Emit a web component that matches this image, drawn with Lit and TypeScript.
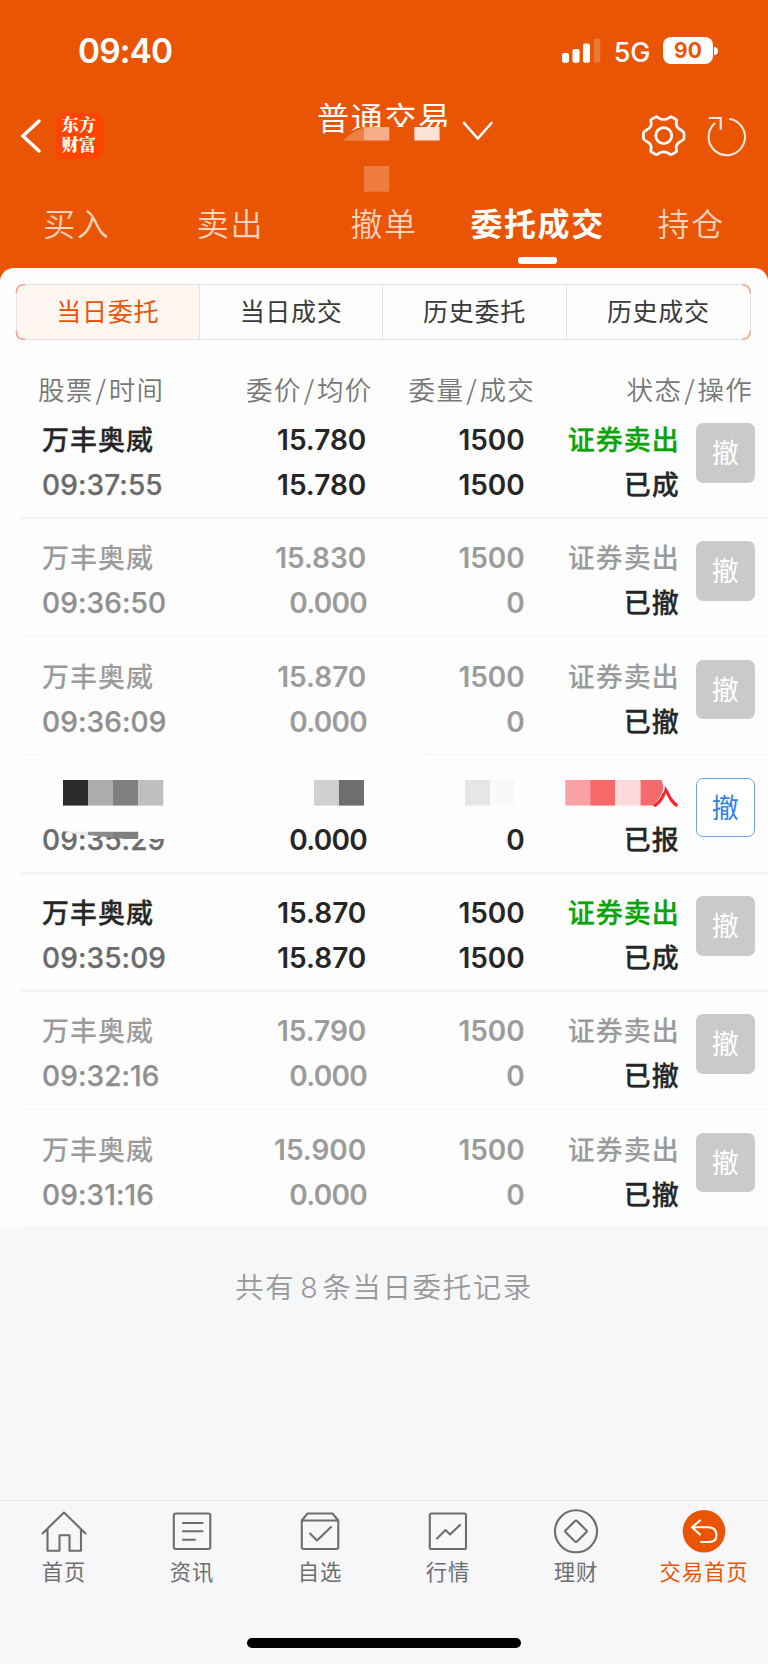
import { LitElement, html, svg, css, nothing } from "lit";
import { customElement, property } from "lit/decorators.js";
import { classMap } from "lit/directives/class-map.js";

interface Order {
  name: string;
  time: string;
  price: string;
  avg: string;
  qty: string;
  filled: string;
  side: string;
  status: string;
  kind: "done" | "cancelled" | "pending";
}

const cancelled = (time: string, price: string): Order => ({
  name: "万丰奥威", time, price, avg: "0.000", qty: "1500", filled: "0",
  side: "证券卖出", status: "已撤", kind: "cancelled",
});
const done = (time: string, price: string): Order => ({
  name: "万丰奥威", time, price, avg: price, qty: "1500", filled: "1500",
  side: "证券卖出", status: "已成", kind: "done",
});

const ORDERS: Order[] = [
  done("09:37:55", "15.780"),
  cancelled("09:36:50", "15.830"),
  cancelled("09:36:09", "15.870"),
  { name: "", time: "09:35:29", price: "", avg: "0.000", qty: "", filled: "0", side: "入", status: "已报", kind: "pending" },
  done("09:35:09", "15.870"),
  cancelled("09:32:16", "15.790"),
  cancelled("09:31:16", "15.900"),
];

@customElement("order-row")
class OrderRow extends LitElement {
  @property({ attribute: false }) order!: Order;

  static styles = css`
    :host { display: block; }
    .row {
      position: relative;
      box-sizing: border-box;
      height: 118.25px;
      display: grid;
      grid-template-columns: 174px 150.3px 158.5px 154px 1fr;
      padding: 18px 13px 0 42px;
      color: #262626;
      font: 600 28px/45px Inter, "Noto Sans CJK SC", sans-serif;
    }
    .line {
      position: absolute;
      left: 20px;
      right: 0;
      bottom: -1px;
      height: 1.5px;
      background: #f4f4f5;
    }
    .col { display: grid; grid-template-rows: 45px 45px; white-space: nowrap; margin-top: 0.7px; }
    .right { text-align: right; }
    .cjk {
      font: 500 27px/45px "Noto Sans CJK SC", sans-serif;
      letter-spacing: 1px;
      margin-top: -2px;
      -webkit-text-stroke: 0.3px currentColor;
    }
    .right .cjk { margin-right: -1px; }
    .time { font-weight: 500; color: #6b6b6b; letter-spacing: 0.1px; -webkit-text-stroke: 0.25px currentColor; }
    .zero { letter-spacing: -0.7px; margin-right: -0.7px; }
    .sell { color: #0aa30a; }
    .buy { color: #f0252b; }
    .cancelled .dim { color: #9b9b9b; }
    .cancelled .cjk.dim { -webkit-text-stroke-width: 0; }
    .cancelled .time { color: #8f8f8f; }
    .btn {
      justify-self: end;
      box-sizing: border-box;
      width: 59.5px;
      height: 59.5px;
      margin-top: 5.5px;
      border-radius: 7px;
      background: #cacaca;
      color: #fff;
      font: 400 27px/58px "Noto Sans CJK SC", sans-serif;
      text-align: center;
    }
    .pending .btn { background: #fff; border: 1.5px solid #6ca4ec; color: #3482e6; line-height: 55px; }
    .mask { position: absolute; left: 0; top: -12px; width: 768px; height: 130px; }
  `;

  private mask() {
    const cell = (x: number, w: number, fill: string) =>
      svg`<rect x=${x} y="38" width=${w} height="25.6" fill=${fill}></rect>`;
    return html`<svg class="mask" viewBox="0 0 768 130">
      <path fill="#fefefe" d="M48 3H405Q430 10 431 26L560 24L655 28Q668 34 664 50L640 68L520 75L390 76L300 80L170 97H130L62 89Q34 76 35 50Q36 18 48 3Z"></path>
      ${cell(63, 25, "#2c2c2c")}${cell(88, 25, "#adadad")}${cell(113, 25.2, "#808080")}${cell(138.2, 25.1, "#bfbfbf")}
      ${cell(314, 25, "#d0d0d0")}${cell(339, 25, "#6e6e6e")}
      ${cell(465, 25, "#e6e6e6")}${cell(490, 25, "#f9f9f9")}
      ${cell(565.3, 24.9, "#f9a1a5")}${cell(590.2, 25, "#f76868")}${cell(615.2, 25.3, "#fddadb")}
      <path fill="#f56b6d" d="M640.5 38H661.5Q664 43 663 48Q660 57 653 63.6H640.5Z"></path>
      <path fill="#e8e8e8" d="M63 89.7H88V94Z"></path>
      <path fill="#8b8b8b" d="M88 89.7H113V95.8L88 93Z"></path>
      <path fill="#808080" d="M113 89.7H138.2V97H125L113 95.8Z"></path>
    </svg>`;
  }

  render() {
    const o = this.order;
    const side = { cjk: true, dim: true, sell: o.kind === "done", buy: o.kind === "pending" };
    const avg = { dim: true, zero: o.avg === "0.000" };
    return html`<div class=${classMap({ row: true, [o.kind]: true })}>
      <div class="col"><span class="cjk dim">${o.name}</span><span class="time">${o.time}</span></div>
      <div class="col right"><span class="dim">${o.price}</span><span class=${classMap(avg)}>${o.avg}</span></div>
      <div class="col right"><span class="dim">${o.qty}</span><span class="dim">${o.filled}</span></div>
      <div class="col right"><span class=${classMap(side)}>${o.side}</span><span class="cjk">${o.status}</span></div>
      <div class="btn">撤</div>
      <div class="line"></div>
      ${o.kind === "pending" ? this.mask() : nothing}
    </div>`;
  }
}

const NAV = [
  { label: "首页", icon: svg`<path d="M1.5 22.5L23 1.5L44.5 22.5M6.5 18V39.8H18.5V24.3H28.5V39.8H40V18"></path>` },
  { label: "资讯", icon: svg`<rect x="4.8" y="2.5" width="36.5" height="35.5" rx="2"></rect><path d="M14 12H33.5M14 20.3H33.5M14 28.7H26"></path>` },
  { label: "自选", icon: svg`<path d="M4.8 9.5L10.5 2.5H35.5L41.3 9.5V36Q41.3 38 39.3 38H6.8Q4.8 38 4.8 36ZM4.8 9.5H41.3M13 22.5L20 29.5L34 16"></path>` },
  { label: "行情", icon: svg`<rect x="4.8" y="2.5" width="36.2" height="35.5" rx="1.5"></rect><path d="M12 27.5L20.5 19L25 23.5L35 14"></path>` },
  { label: "理财", icon: svg`<circle cx="23" cy="20.3" r="21"></circle><path d="M22 10L12.7 19.3Q11.7 20.3 12.7 21.3L22 30.6Q23 31.6 24 30.6L33.3 21.3Q34.3 20.3 33.3 19.3L24 10Q23 9 22 10Z"></path>` },
  { label: "交易首页", active: true, icon: svg`<circle cx="23" cy="20.3" r="21.3" fill="#e95504" stroke="none"></circle><path stroke="#fff" d="M19 9.5L11 16.3L19 23.5M11 16.3H28Q35.5 17 35.5 24T28 31H20"></path>` },
];

@customElement("app-root")
class AppRoot extends LitElement {
  static styles = css`
    :host {
      display: flex;
      flex-direction: column;
      width: 768px;
      height: 1664px;
      overflow: hidden;
      position: relative;
      background: #e95504;
      color: #fff;
      font-family: "Noto Sans CJK SC", sans-serif;
    }
    svg { display: block; overflow: visible; }
    .status { height: 96px; display: flex; align-items: flex-start; padding: 0 50px 0 78px; }
    .clock { flex: 1; margin-top: 30.5px; font: 600 33.5px/41px Inter, sans-serif; letter-spacing: -0.9px; }
    .signal { margin: 38px 12.5px 0 0; }
    .net { margin: 35.5px 12.5px 0 0; font: 500 27px/33px Inter, sans-serif; }
    .battery { display: flex; align-items: center; margin-top: 37px; }
    .cell {
      width: 50px; height: 27px; border-radius: 8px; background: #fff; color: #e95504;
      font: 700 21px/27.5px Inter, sans-serif; text-align: center;
    }
    .nub { width: 4px; height: 8px; margin-left: 1px; border-radius: 0 4px 4px 0; background: #fff; }
    .header {
      position: relative;
      height: 96px;
      display: grid;
      grid-template-columns: 55.5px 261.5px 145px 179.5px 63.5px 1fr;
    }
    .back { margin: 23px 0 0 21px; }
    .logo {
      width: 47px; height: 46.5px; margin-top: 16.5px; border-radius: 8px; background: #ff4400;
      box-sizing: border-box; padding: 3px 0 0 6px;
      font: 900 17.3px/20px "Liberation Serif", "Noto Serif CJK SC", "Noto Sans CJK SC", serif;
    }
    .title { margin-top: -3px; font: 400 32px/46px "Noto Sans CJK SC", sans-serif; letter-spacing: 1.7px; white-space: nowrap; }
    .chev { margin-top: 25px; }
    .gear { margin-top: 17px; }
    .reload { margin-top: 17px; }
    .censor { position: absolute; left: 300px; top: 0; width: 160px; height: 100px; }
    .tabs { height: 75.5px; display: grid; grid-template-columns: repeat(5, 1fr); }
    .tab {
      display: flex; flex-direction: column; align-items: center;
      font: 350 32px/60px "Noto Sans CJK SC", sans-serif; letter-spacing: 1.6px; color: #fdd3bb;
    }
    .tab.on { color: #fff; font-weight: 700; }
    .bar { width: 39.5px; height: 6.5px; margin-top: 5.3px; border-radius: 3px; background: #fff; }
    .sheet { background: #fdfdfd; border-radius: 14px 14px 0 0; height: 960px; }
    .segs {
      box-sizing: border-box;
      margin: 0 17px 0 15.5px; height: 56px;
      display: grid; grid-template-columns: repeat(4, 1fr);
      border: 1.5px solid #dfe0e8; border-radius: 8px; overflow: hidden;
    }
    .segwrap { position: relative; padding-top: 16px; }
    .corners { position: absolute; left: 0; top: 0; width: 768px; height: 80px; }
    .seg {
      border-right: 1.5px solid #dfe0e8; text-align: center; color: #3a3a3a; white-space: nowrap;
      font: 400 25px/51px "Noto Sans CJK SC", sans-serif; letter-spacing: 0.7px;
    }
    .seg:last-child { border-right: 0; }
    .seg.on { background: #fff5f1; color: #e95504; }
    .heads {
      display: grid; grid-template-columns: 174px 160.5px 162.5px 1fr; padding: 26px 15px 0 38px;
      height: 60px; box-sizing: border-box; color: #777; white-space: nowrap;
      font: 350 26.5px/46px "Noto Sans CJK SC", sans-serif; letter-spacing: 1.3px;
    }
    .heads .r { text-align: right; }
    .sl { padding: 0 1.5px 0 2px; }
    .summary {
      flex: 1; background: #f6f7f9; color: #999; text-align: center;
      font: 350 28.5px/42px "Noto Sans CJK SC", sans-serif; letter-spacing: 1.6px; padding-top: 37px;
    }
    .n { font-family: Inter, sans-serif; margin: 0 3px 0 5px; }
    .nav {
      box-sizing: border-box; height: 164px; border-top: 1px solid #ebe4e6; background: #f7f7fa;
      display: grid; grid-template: 137px 10px / repeat(6, 1fr);
    }
    .item {
      display: flex; flex-direction: column; align-items: center; color: #6e6e70; padding-top: 10px;
      font: 400 21.3px/32px "Noto Sans CJK SC", sans-serif; letter-spacing: 0.9px;
    }
    .item svg { margin-bottom: 2.4px; }
    .item.on { color: #e95504; }
    .home { grid-column: 1 / -1; justify-self: center; width: 274px; height: 10px; border-radius: 5px; background: #000; }
  `;

  render() {
    return html`
      <div class="status">
        <div class="clock">09:40</div>
        <svg class="signal" width="39" height="25" fill="#fff">
          <rect x="0" y="15" width="7" height="9.8" rx="2"></rect>
          <rect x="10.5" y="11" width="7" height="13.8" rx="2"></rect>
          <rect x="21" y="5.5" width="7" height="19.3" rx="2"></rect>
          <rect x="31.8" y="0.5" width="6.5" height="24.3" rx="2" opacity=".2"></rect>
        </svg>
        <div class="net">5G</div>
        <div class="battery"><div class="cell">90</div><div class="nub"></div></div>
      </div>
      <div class="header">
        <svg class="back" width="20" height="34" fill="none" stroke="#fff" stroke-width="3.5" stroke-linecap="round"><path d="M18 2L2 17L18 32"></path></svg>
        <div class="logo">东方<br>财富</div>
        <div class="title">普通交易</div>
        <svg class="chev" width="32" height="20" fill="none" stroke="#fff" stroke-width="2.6" stroke-linecap="round"><path d="M2 2L15.8 17.5L29.5 2"></path></svg>
        <svg class="gear" width="44" height="44" viewBox="-22 -22 44 44" fill="none" stroke="#fff" stroke-width="2.8" stroke-linejoin="round">
          <circle cx="-.3" cy=".7" r="8"></circle>
          <path transform="translate(-.3 .7) scale(.97)" d="M-7.6 -19.6C-4.5 -18.5 -4.5 -16.7 0 -16.7S4.5 -18.5 7.6 -19.6Q11 -18.3 13.5 -16C12.6 -12.8 11.8 -11 14.4 -8.3S18.5 -6 20.7 -3.5Q21.3 0 20.7 3.5C18.5 6 17 5.7 14.4 8.3S12.6 12.8 13.5 16Q11 18.3 7.6 19.6C4.5 18.5 4.5 16.7 0 16.7S-4.5 18.5 -7.6 19.6Q-11 18.3 -13.5 16C-12.6 12.8 -11.8 11 -14.4 8.3S-18.5 6 -20.7 3.5Q-21.3 0 -20.7 -3.5C-18.5 -6 -17 -5.7 -14.4 -8.3S-12.6 -12.8 -13.5 -16Q-11 -18.3 -7.6 -19.6Z"></path>
        </svg>
        <svg class="reload" width="40" height="44" fill="none" stroke="#ffe9dd" stroke-width="2.1" stroke-linecap="round">
          <path d="M25 6A18.2 18.2 0 1 1 9.5 10.5M4.5 5H15.7V16"></path>
        </svg>
        <svg class="censor" viewBox="0 0 160 100">
          <path fill="#e95504" d="M43 45L49 36L58 32L64 31H148V33L151 35V50H43Z"></path>
          <path fill="#ee8046" d="M43 44.7Q52 36 60 33L64 31.5V44.7Z"></path>
          <rect x="64" y="31" width="25.3" height="13.5" fill="#f6ad88"></rect>
          <rect x="114.3" y="31" width="25.3" height="13.5" fill="#fbe2d5"></rect>
          <rect x="64" y="70" width="25.3" height="25.7" fill="#ee7c3f"></rect>
        </svg>
      </div>
      <div class="tabs">
        ${["买入", "卖出", "撤单", "委托成交", "持仓"].map((t, i) => html`
          <div class=${classMap({ tab: true, on: i === 3 })}>${t}${i === 3 ? html`<div class="bar"></div>` : nothing}</div>`)}
      </div>
      <div class="sheet">
        <div class="segwrap">
          <div class="segs">
            ${["当日委托", "当日成交", "历史委托", "历史成交"].map((t, i) => html`<div class=${classMap({ seg: true, on: i === 0 })}>${t}</div>`)}
          </div>
          <svg class="corners" fill="none" stroke="#f0a283" stroke-width="1.5">
            <path d="M25 16.7H23Q16.3 17 16.3 25M16.3 63Q16.3 71 23 71.3H25M742 16.7Q750.2 17 750.2 25M750.2 63Q750.2 71 742 71.3"></path>
          </svg>
        </div>
        <div class="heads">
          <div>股票<span class="sl">/</span>时间</div>
          <div class="r">委价<span class="sl">/</span>均价</div>
          <div class="r">委量<span class="sl">/</span>成交</div>
          <div class="r">状态<span class="sl">/</span>操作</div>
        </div>
        ${ORDERS.map((o) => html`<order-row .order=${o}></order-row>`)}
      </div>
      <div class="summary">共有<span class="n">8</span>条当日委托记录</div>
      <div class="nav">
        ${NAV.map((n) => html`<div class=${classMap({ item: true, on: !!n.active })}>
          <svg width="46" height="42" fill="none" stroke="currentColor" stroke-width="2.1" stroke-linecap="round" stroke-linejoin="round">${n.icon}</svg>${n.label}</div>`)}
        <div class="home"></div>
      </div>
    `;
  }
}
